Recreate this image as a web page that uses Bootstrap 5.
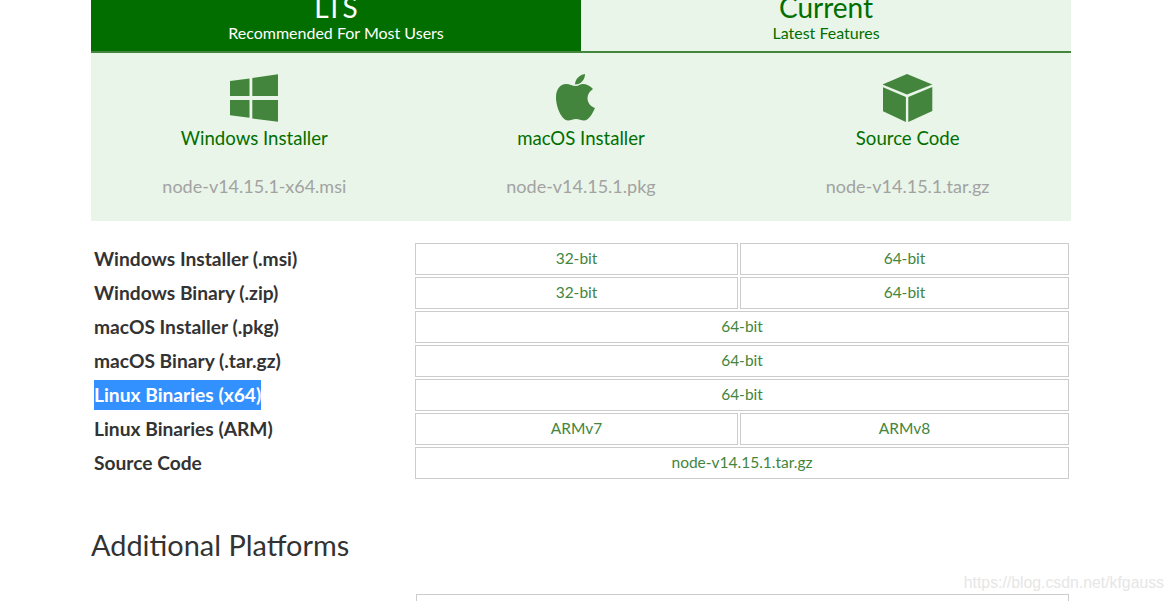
<!DOCTYPE html>
<html lang="en">
<head>
  <meta charset="UTF-8">
  <title>Downloads</title>
  <link href="https://cdn.jsdelivr.net/npm/bootstrap@5.3.3/dist/css/bootstrap.min.css" rel="stylesheet">
  <style>
    html, body { overflow: hidden; height: 601px; }
    body { font-family: "Lato", "Liberation Sans", sans-serif; color: #333; background: #fff; }
    .dl-wrap { width: 980px; margin-left: 91px; }
    .rel-tab { height: 53px; overflow: hidden; border-bottom: 2px solid #43853d; text-align: center; display: flex; flex-direction: column; justify-content: flex-end; padding-bottom: 8px; color: #026e00; background: #e9f5e8; }
    .rel-tab.is-active { background: #026e00; color: #fff; }
    .rel-name { font-size: 28px; line-height: 32px; }
    .rel-sub { font-size: 16px; line-height: 20px; }
    .os-panel { background: #e9f5e8; height: 168px; padding-top: 21px; }
    .os-cell { text-align: center; }
    .os-icon { display: block; margin: 0 auto; height: 48px; fill: #43853d; }
    .os-label { color: #026e00; font-size: 18.6px; line-height: 24px; margin-top: 4px; }
    .os-file { color: #a2a2a2; font-size: 18px; line-height: 24px; margin-top: 24px; }
    .dl-table { margin-top: 22px; width: 978px; }
    .dl-row { height: 32px; margin-bottom: 2px; }
    .dl-name { width: 324px; padding-left: 3px; font-size: 19.2px; font-weight: 700; line-height: 32px; }
    .dl-sel { background: #3390ff; color: #fff; display: inline-block; line-height: 30px; }
    .dl-btn { border: 1px solid #ccc; height: 32px; line-height: 29px; text-align: center; color: #43853d; font-size: 15.5px; text-decoration: none; flex: 1 1 0; }
    .dl-btn.is-half { flex: 0 0 323px; margin-right: 2px; }
    .more-title { font-size: 28.9px; line-height: 36px; font-weight: 400; margin: 48px 0 31px; }
    .more-box { margin-left: 325px; width: 653px; height: 32px; border: 1px solid #ccc; }
    .mark-url { position: absolute; right: 8px; bottom: 6px; font-family: "Liberation Sans", sans-serif; font-size: 15.8px; color: #e6e6e6; }
  </style>
</head>
<body>
  <div class="dl-wrap">
    <div class="row g-0">
      <div class="col-6 rel-tab is-active">
        <div class="rel-name">LTS</div>
        <div class="rel-sub">Recommended For Most Users</div>
      </div>
      <div class="col-6 rel-tab">
        <div class="rel-name">Current</div>
        <div class="rel-sub">Latest Features</div>
      </div>
    </div>

    <div class="row g-0 os-panel">
      <div class="col-4 os-cell">
        <svg class="os-icon" width="48" viewBox="230 74 48 48">
          <polygon points="230,81 249.5,78.5 249.5,96 230,96"/>
          <polygon points="252.3,78 278,74.3 278,96 252.3,96"/>
          <polygon points="230,100 249.5,100 249.5,117.7 230,115.3"/>
          <polygon points="252.3,100 278,100 278,121.7 252.3,118.5"/>
        </svg>
        <div class="os-label">Windows Installer</div>
        <div class="os-file">node-v14.15.1-x64.msi</div>
      </div>
      <div class="col-4 os-cell">
        <svg class="os-icon" width="50" viewBox="556 73.5 50 48">
          <path d="M576 85.5C572 85.5 570 83.5 566 83.5C560 83.5 556 89 556 97C556 107 562 120 568 120C571 120 573 118.5 576 118.5C579 118.5 581 120 584 120C589 120 593 112 595 107.5C590 105.5 587.5 102 587.5 97.5C587.5 93.5 590 90.5 593 88.5C590 85 586 83.5 583 83.5C580 83.5 578.5 85.5 576 85.5Z"/>
          <path d="M575 84C575 79 579 74.5 585 73.5C585 79 581 84 575 84Z"/>
        </svg>
        <div class="os-label">macOS Installer</div>
        <div class="os-file">node-v14.15.1.pkg</div>
      </div>
      <div class="col-4 os-cell">
        <svg class="os-icon" width="50" viewBox="882.7 74 50 48">
          <polygon points="906.7,74 932,84.5 906.7,94.5 882,84.5"/>
          <polygon points="882,87 905.6,97 905.6,122 882,111"/>
          <polygon points="932,87 908,97 908,122 932,111"/>
        </svg>
        <div class="os-label">Source Code</div>
        <div class="os-file">node-v14.15.1.tar.gz</div>
      </div>
    </div>

    <div class="dl-table">
      <div class="d-flex dl-row">
        <div class="dl-name">Windows Installer (.msi)</div>
        <div class="d-flex flex-fill">
          <a class="dl-btn is-half" href="#">32-bit</a>
          <a class="dl-btn" href="#">64-bit</a>
        </div>
      </div>
      <div class="d-flex dl-row">
        <div class="dl-name">Windows Binary (.zip)</div>
        <div class="d-flex flex-fill">
          <a class="dl-btn is-half" href="#">32-bit</a>
          <a class="dl-btn" href="#">64-bit</a>
        </div>
      </div>
      <div class="d-flex dl-row">
        <div class="dl-name">macOS Installer (.pkg)</div>
        <a class="dl-btn" href="#">64-bit</a>
      </div>
      <div class="d-flex dl-row">
        <div class="dl-name">macOS Binary (.tar.gz)</div>
        <a class="dl-btn" href="#">64-bit</a>
      </div>
      <div class="d-flex dl-row">
        <div class="dl-name"><span class="dl-sel">Linux Binaries (x64)</span></div>
        <a class="dl-btn" href="#">64-bit</a>
      </div>
      <div class="d-flex dl-row">
        <div class="dl-name">Linux Binaries (ARM)</div>
        <div class="d-flex flex-fill">
          <a class="dl-btn is-half" href="#">ARMv7</a>
          <a class="dl-btn" href="#">ARMv8</a>
        </div>
      </div>
      <div class="d-flex dl-row">
        <div class="dl-name">Source Code</div>
        <a class="dl-btn" href="#">node-v14.15.1.tar.gz</a>
      </div>
    </div>

    <h2 class="more-title">Additional Platforms</h2>
    <div class="more-box"></div>
  </div>
  <div class="mark-url">https://blog.csdn.net/kfgauss</div>
</body>
</html>
